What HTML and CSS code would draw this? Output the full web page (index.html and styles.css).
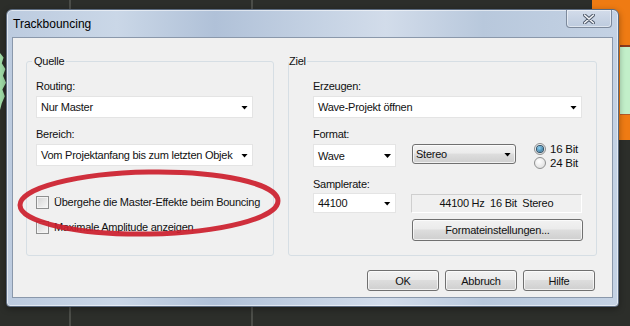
FILE: index.html
```html
<!DOCTYPE html>
<html lang="de">
<head>
  <meta charset="UTF-8" />
  <title>Trackbouncing</title>
  <link rel="stylesheet" href="styles.css">
</head>
<body>

<div class="daw">
  <div class="lane lane-a"><div class="wave-left"></div></div>
  <div class="lane lane-b"></div>
  <div class="lane lane-c"></div>
  <div class="clip"><div class="clip-wave"></div></div>
</div>

<div class="dialog">
  <div class="titlebar">
    <span class="title">Trackbouncing</span>
    <button class="close">
      <svg width="12" height="10" viewBox="0 0 12 10">
        <path d="M1.5 1 L10.5 9 M10.5 1 L1.5 9" stroke="#4a5566" stroke-width="3.4" stroke-linecap="round"/>
        <path d="M1.5 1 L10.5 9 M10.5 1 L1.5 9" stroke="#f4f6f9" stroke-width="1.6" stroke-linecap="round"/>
      </svg>
    </button>
  </div>

  <div class="client">
    <div class="groups">
      <fieldset class="group quelle">
        <legend>Quelle</legend>
        <div class="label">Routing:</div>
        <div class="combo"><span class="val">Nur Master</span></div>
        <div class="label">Bereich:</div>
        <div class="combo"><span class="val">Vom Projektanfang bis zum letzten Objek</span></div>
        <label class="check first"><span class="box"></span>Übergehe die Master-Effekte beim Bouncing</label>
        <label class="check"><span class="box"></span>Maximale Amplitude anzeigen</label>
      </fieldset>

      <fieldset class="group ziel">
        <legend>Ziel</legend>
        <div class="label">Erzeugen:</div>
        <div class="combo"><span class="val">Wave-Projekt öffnen</span></div>
        <div class="label">Format:</div>
        <div class="format-row">
          <div class="combo small"><span class="val">Wave</span></div>
          <div class="combo raised"><span class="val">Stereo</span></div>
          <div class="radios">
            <label class="radio"><span class="dot on"></span>16 Bit</label>
            <label class="radio"><span class="dot"></span>24 Bit</label>
          </div>
        </div>
        <div class="label rate">Samplerate:</div>
        <div class="rate-row">
          <div class="combo small short"><span class="val">44100</span></div>
          <div class="info">44100 Hz&nbsp; 16 Bit&nbsp; Stereo</div>
        </div>
        <button class="btn settings">Formateinstellungen...</button>
      </fieldset>
    </div>

    <div class="actions">
      <button class="btn">OK</button>
      <button class="btn">Abbruch</button>
      <button class="btn">Hilfe</button>
    </div>
  </div>

  <svg class="mark" width="280" height="80" viewBox="0 0 280 80">
    <ellipse cx="136" cy="40" rx="129" ry="31" fill="none" stroke="#cc1e2c" stroke-width="5" stroke-opacity="0.92" transform="rotate(-1 136 40)"/>
  </svg>
</div>

</body>
</html>
```

FILE: styles.css
```css
* {
  margin: 0;
  padding: 0;
  box-sizing: border-box;
}

body {
  width: 630px;
  height: 326px;
  overflow: hidden;
  background: #2c2e2a;
  font-family: 'Liberation Sans', Arial, sans-serif;
  font-size: 11px;
  letter-spacing: -0.25px;
  color: #111;
  position: relative;
}

/* background: the DAW behind the dialog */
.daw {
  display: flex;
  height: 326px;
}

.lane {
  height: 100%;
  border-right: 2px solid;
  border-image: linear-gradient(to right, #1a1b19 50%, #4b4d48 50%) 1;
}

.lane-a { width: 71px; }
.lane-b { width: 182px; }
.lane-c { flex: 1; border: none; }

.wave-left {
  width: 6px;
  height: 57px;
  margin-top: 53px;
  background: #9fdba6;
  clip-path: polygon(0 0, 60% 8%, 30% 18%, 90% 28%, 50% 40%, 100% 52%, 40% 64%, 80% 76%, 30% 88%, 0 100%);
}

.clip {
  width: 38px;
  height: 140px;
  background: #ef7b13;
  padding: 45px 0 0 28px;
}

.clip-wave {
  width: 10px;
  height: 70px;
  background: #c2efc9;
  border-top: 2px solid #8b3a1e;
  border-bottom: 1px solid #b45a2a;
}

/* dialog window */
.dialog {
  position: absolute;
  left: 6px;
  top: 9px;
  width: 613px;
  height: 298px;
  padding: 0 5px 8px;
  border: 1px solid #5b6a7e;
  border-radius: 6px 6px 4px 4px;
  background: linear-gradient(90deg, #bccbdf 0%, #cad7e7 18%, #b0c1d8 34%, #c6d3e4 52%, #d2dcea 62%, #b8c8dc 78%, #c4d2e4 100%);
  box-shadow: inset 0 0 0 1px rgba(255,255,255,0.55), 0 2px 6px rgba(0,0,0,0.35);
}

.titlebar {
  display: flex;
  align-items: flex-start;
  height: 27px;
}

.title {
  font-size: 12px;
  letter-spacing: 0;
  line-height: 16px;
  margin: 6px 0 0 1px;
  color: #000;
}

.close {
  margin-left: auto;
  margin-right: 1px;
  width: 46px;
  height: 18px;
  border: 1px solid #7d8a9c;
  border-top: none;
  border-radius: 0 0 4px 4px;
  background: linear-gradient(#d3dcea, #bdcbde);
  box-shadow: inset 0 0 0 1px rgba(255,255,255,0.5);
  display: flex;
  align-items: center;
  justify-content: center;
}

.client {
  height: 261px;
  border: 1px solid #8a98ab;
  background: #f0f0f0;
  padding: 17px 17px 0 13px;
}

.groups {
  display: flex;
  gap: 14px;
}

.group {
  flex: none;
  min-width: 0;
  height: 201px;
  border: 1px solid #d6dee4;
  border-radius: 3px;
  padding-top: 11px;
}

.group legend {
  line-height: 13px;
  padding: 0 2px;
}

.quelle {
  width: 248px;
  padding-left: 9px;
  padding-right: 20px;
}

.quelle legend { margin-left: -4px; }

.ziel {
  width: 309px;
  padding-left: 24px;
  padding-right: 14px;
}

.ziel legend { margin-left: -24px; padding: 0 1px 0 0; }

.label {
  line-height: 14px;
  height: 14px;
}

.combo + .label { margin-top: 9px; }

.combo {
  display: flex;
  align-items: center;
  height: 22px;
  margin-top: 3px;
  padding-left: 4px;
  background: #fff;
  border: 1px solid #e4e4e4;
}

.combo .val {
  flex: 1;
  min-width: 0;
  white-space: nowrap;
}

.combo::after {
  content: '';
  width: 7px;
  height: 4px;
  margin: 1px 4px 0 6px;
  background: #000;
  clip-path: polygon(0 0, 100% 0, 50% 100%);
  flex: none;
}

.check {
  display: flex;
  align-items: center;
  gap: 5px;
  width: 260px;
  height: 14px;
  margin-top: 11px;
  white-space: nowrap;
}

.check.first { margin-top: 29px; }

.box {
  width: 13px;
  height: 13px;
  flex: none;
  border: 1px solid #8e8f8f;
  background: linear-gradient(135deg, #d4d4d4, #f8f8f8);
  box-shadow: inset 0 0 0 1px #f4f4f4;
}

.format-row {
  display: flex;
  align-items: flex-start;
  height: 23px;
  margin-top: 3px;
}

.format-row .combo { margin-top: 0; }

.combo.small {
  width: 83px;
  height: 23px;
}

.combo.raised {
  width: 104px;
  height: 20px;
  margin-left: 16px;
  padding-left: 3px;
  border: 1px solid #707070;
  border-radius: 3px;
  background: linear-gradient(#f3f3f3 0%, #ebebeb 45%, #dddddd 50%, #cfcfcf 100%);
  box-shadow: inset 0 0 0 1px rgba(255,255,255,0.7);
}

.radios {
  margin: -2px 0 0 18px;
}

.radio {
  display: flex;
  align-items: center;
  gap: 4px;
  height: 14px;
  font-size: 11.5px;
  white-space: nowrap;
}

.dot {
  width: 12px;
  height: 12px;
  border-radius: 50%;
  border: 1px solid #8f9090;
  background: radial-gradient(circle at 40% 35%, #ffffff, #d8d8d8);
  display: flex;
  align-items: center;
  justify-content: center;
}

.dot.on::after {
  content: '';
  width: 6px;
  height: 6px;
  border-radius: 50%;
  background: radial-gradient(circle at 40% 35%, #8fd3f5, #1f5f86);
  box-shadow: 0 0 0 1px #2d4f66;
}

.label.rate { margin-top: 10px; }

.rate-row {
  display: flex;
  align-items: flex-start;
  margin-top: 2px;
}

.combo.short {
  height: 20px;
  margin-top: 0;
}

.info {
  width: 172px;
  height: 19px;
  margin: 1px 0 0 15px;
  border: 1px solid;
  border-color: #cfcfcf #ffffff #ffffff #cfcfcf;
  text-align: center;
  line-height: 17px;
}

.btn {
  font-family: inherit;
  font-size: 11px;
  letter-spacing: -0.2px;
  color: #111;
  height: 21px;
  border: 1px solid #707070;
  border-radius: 3px;
  background: linear-gradient(#f2f2f2 0%, #ebebeb 45%, #dddddd 50%, #cfcfcf 100%);
  box-shadow: inset 0 0 0 1px rgba(255,255,255,0.7);
}

.settings {
  display: block;
  width: 171px;
  height: 22px;
  margin: 6px 0 0 99px;
}

.actions {
  display: flex;
  justify-content: flex-end;
  gap: 6px;
  margin-top: 14px;
}

.actions .btn { width: 72px; }

/* red hand-drawn marker over the checkbox */
.mark {
  position: absolute;
  left: 6px;
  top: 153px;
}
```
